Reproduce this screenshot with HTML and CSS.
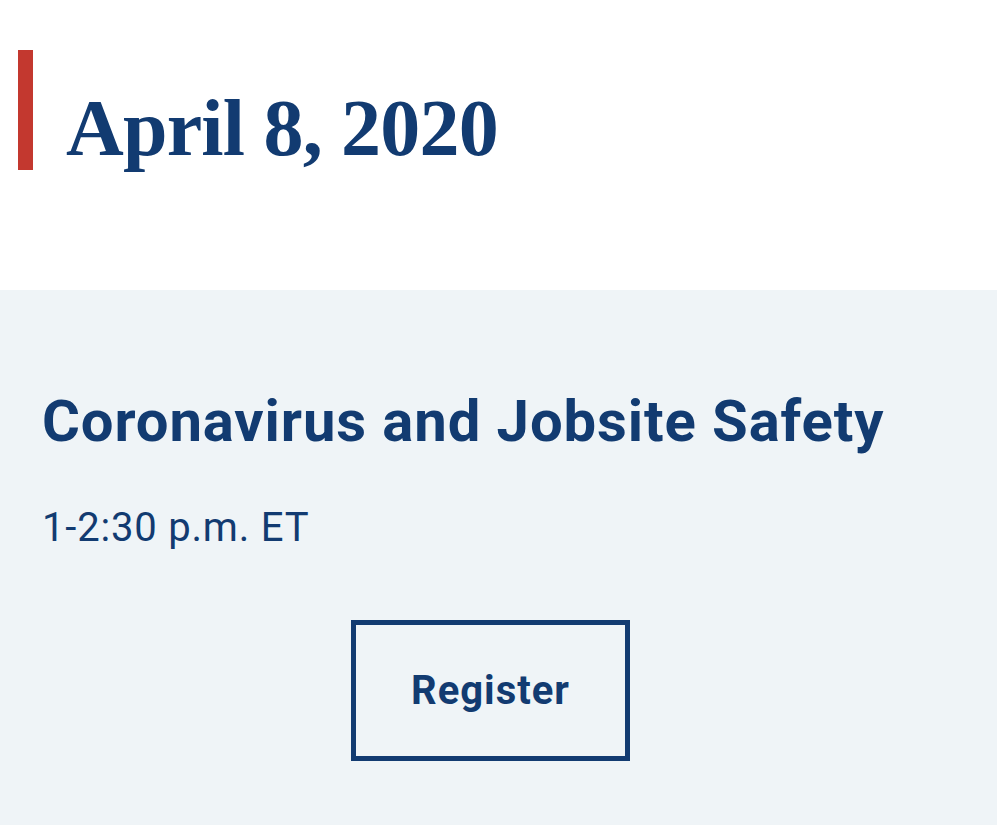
FILE: index.html
```html
<!DOCTYPE html>
<html lang="en">

<head>
    <meta charset="UTF-8">
    <meta name="viewport" content="width=device-width, initial-scale=1.0">
    <title>Events</title>

    <link rel="stylesheet" href="styles.css">
</head>

<body>
    <div class="date-head">
        <h1 class="date-title">April 8, 2020</h1>
    </div>

    <div class="event">
        <h2 class="event-title">Coronavirus and Jobsite Safety</h2>
        <p class="event-time">1-2:30 p.m. ET</p>
        <div class="event-actions">
            <a class="btn" href="#">Register</a>
        </div>
    </div>
</body>

</html>
```

FILE: styles.css
```css
* {
    margin: 0;
    padding: 0;
    box-sizing: border-box;
}

body {
    background: #ffffff;
    color: #123b71;
    font-family: Roboto, "Liberation Sans", sans-serif;
}

.date-head {
    padding: 50px 0 120px 18px;
}

.date-title {
    /* the red bar on the left is just the border */
    border-left: 15px solid #c3382f;
    height: 120px;
    padding: 38px 0 2px 33px;
    font-family: "Liberation Serif", "DejaVu Serif", serif;
    font-size: 80px;
    font-weight: bold;
    line-height: 1;
    letter-spacing: -0.8px;
    font-variant-numeric: oldstyle-nums;
    color: #123b71;
}

.event {
    background: #eff4f7;
    padding: 98px 58px 64px 42px;
    min-height: 535px;
}

.event-title {
    font-size: 58px;
    font-weight: bold;
    line-height: 1.16;
    letter-spacing: 0.9px;
}

.event-time {
    margin-top: 49px;
    font-size: 40px;
    line-height: 1.2;
    letter-spacing: 0.8px;
}

.event-actions {
    margin-top: 68px;
    text-align: center;
}

.btn {
    display: inline-block;
    width: 279px;
    height: 141px;
    border: 5px solid #123b71;
    line-height: 131px;
    font-size: 40px;
    font-weight: bold;
    letter-spacing: 1px;
    color: #123b71;
    text-decoration: none;
}
```
